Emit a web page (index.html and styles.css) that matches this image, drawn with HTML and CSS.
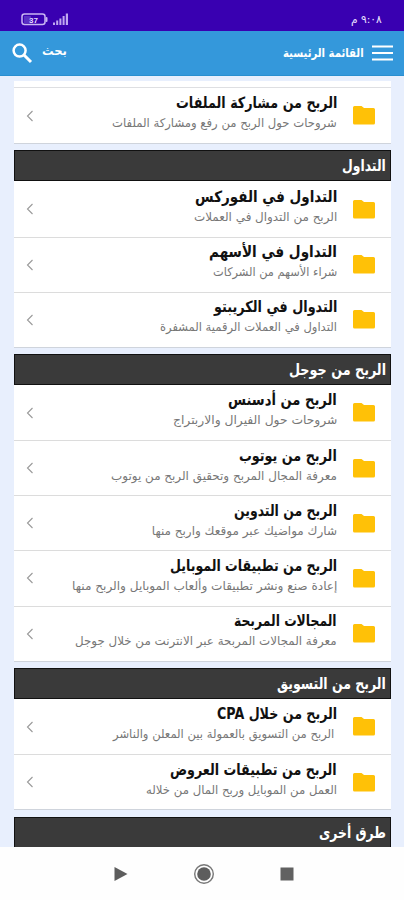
FILE: index.html
```html
<!DOCTYPE html>
<html lang="ar" dir="rtl">
<head>
<meta charset="utf-8">
<title>القائمة الرئيسية</title>
<link rel="stylesheet" href="styles.css">
</head>
<body>
<div class="status">
  <span class="clock"><span class="fit" data-w="31">٩:٠٨ م</span></span>
  <svg class="status-icons" width="50" height="14" viewBox="0 0 50 14">
    <rect x="1" y="2" width="23" height="10.5" rx="2.5" fill="none" stroke="#c9b5f2" stroke-width="1.5"/>
    <rect x="24.5" y="5" width="2" height="5" rx="1" fill="#c9b5f2"/>
    <rect x="3" y="4" width="7" height="7" fill="#5a2fc4"/>
    <text x="12.5" y="10.5" class="battery-text" direction="ltr" text-anchor="middle">37</text>
    <g fill="#c0a8f0"><rect x="32" y="10.5" width="2" height="2.5"/><rect x="35.2" y="8.5" width="2" height="4.5"/><rect x="38.4" y="6.5" width="2" height="6.5"/><rect x="41.6" y="4" width="2" height="9"/><rect x="44.8" y="1.5" width="2.2" height="11.5"/></g>
  </svg>
</div>
<header class="bar">
  <svg class="menu" width="21" height="16" viewBox="0 0 21 16"><path d="M0 1.5H21M0 8H21M0 14.5H21" stroke="#fff" stroke-width="2.2"/></svg>
  <span class="bar-title"><span class="fit" data-w="81">القائمة الرئيسية</span></span>
  <span class="search-label"><span class="fit" data-w="25">بحث</span></span>
  <svg class="search" width="21" height="21" viewBox="0 0 21 21"><circle cx="7.6" cy="7.6" r="6" fill="none" stroke="#fff" stroke-width="2.5"/><path d="M12 12L19 19" stroke="#fff" stroke-width="3"/></svg>
</header>
<main class="list" id="list"></main>
<nav class="nav">
  <svg width="14" height="14" viewBox="0 0 14 14"><path d="M.5.5h13v13H.5z" fill="#616161"/></svg>
  <svg width="22" height="22" viewBox="0 0 22 22"><circle cx="11" cy="11" r="9.3" fill="none" stroke="#777" stroke-width="1.4"/><circle cx="11" cy="11" r="6.8" fill="#5d5d5d"/></svg>
  <svg width="14" height="16" viewBox="0 0 14 16"><path d="M.5 1L13.5 8L.5 15Z" fill="#5d5d5d"/></svg>
</nav>
<script src="list.js"></script>
</body>
</html>
```
FILE: styles.css
```css
* { box-sizing: border-box; }
body {
  margin: 0;
  width: 404px;
  height: 900px;
  overflow: hidden;
  display: flex;
  flex-direction: column;
  background: #fefefe;
  font-family: "DejaVu Sans", sans-serif;
}
.fit {
  display: inline-block;
  white-space: nowrap;
  transform-origin: right center;
}
.status {
  flex: none;
  height: 31px;
  padding: 8px 22px 0 21px;
  display: flex;
  justify-content: space-between;
  align-items: center;
  background: #3900b1;
  color: #e9e0ff;
}
.clock { width: 31px; font-size: 11px; line-height: 14px; }
.status-icons { margin-top: -1px; }
.battery-text { font: bold 8px "Liberation Sans", sans-serif; fill: #e4d9ff; }
.bar {
  flex: none;
  height: 45px;
  padding: 0 11px 0 12px;
  display: flex;
  align-items: center;
  background: #3498db;
  color: #fff;
  font-size: 12px;
  font-weight: bold;
  line-height: 20px;
  border-bottom: 1px solid #298fd0;
}
.bar-title { width: 85px; margin-right: 8px; }
.search-label { width: 25px; margin-right: auto; margin-left: 9px; margin-top: -5px; }
.list {
  flex: none;
  height: 771px;
  overflow: hidden;
  padding: 5px 13px 0 14px;
  background: #e8effd;
}
.rows { background: #fff; border-bottom: 1px solid #cfd4dc; }
.stub { height: 7px; background: #fff; border-bottom: 1px solid #dedfe2; }
.heading {
  height: 31px;
  margin-top: 6.4px;
  padding-right: 4px;
  background: #3a3a3a;
  border: 1px solid #111;
  color: #fff;
  font-size: 15.5px;
  font-weight: bold;
  line-height: 31px;
}
.heading .fit { vertical-align: top; }
.row {
  height: 55.1px;
  display: flex;
  align-items: center;
  padding: 0 16px 0 12px;
}
.row + .row { border-top: 1px solid #dcdcdc; }
.folder { flex: none; margin-left: 16px; }
.text { flex: 1; min-width: 0; overflow: visible; }
.title, .sub { display: block; height: 20px; line-height: 20px; }
.title { font-size: 15.5px; font-weight: bold; color: #111; margin-top: -5px; }
.sub { font-size: 12px; color: #777; }
.sub.indent { padding-right: 3px; }
.chevron { flex: none; }
.nav {
  flex: 1;
  display: flex;
  align-items: center;
  justify-content: space-between;
  padding: 0 110px 0 114px;
  background: #fefefe;
}
```
FILE: list.js
```js
// Each row: title, title width, subtitle, subtitle width.
const groups = [
  { rows: [["الربح من مشاركة الملفات", 161, "شروحات حول الربح من رفع ومشاركة الملفات", 225]] },
  { name: "التداول", w: 44, rows: [
    ["التداول في الفوركس", 142, "الربح من التدوال في العملات", 143],
    ["التداول في الأسهم", 128, "شراء الأسهم من الشركات", 124],
    ["التدوال في الكريبتو", 123, "التداول في العملات الرقمية المشفرة", 177]] },
  { name: "الربح من جوجل", w: 97, rows: [
    ["الربح من أدسنس", 109, "شروحات حول الفيرال والاربتراج", 164],
    ["الربح من يوتوب", 98, "معرفة المجال المربح وتحقيق الربح من يوتوب", 226],
    ["الربح من التدوين", 103, "شارك مواضيك عبر موقعك واربح منها", 185],
    ["الربح من تطبيقات الموبايل", 167, "إعادة صنع ونشر تطبيقات وألعاب الموبايل والربح منها", 265],
    ["المجالات المربحة", 103, "معرفة المجالات المربحة عبر الانترنت من خلال جوجل", 262]] },
  { name: "الربح من التسويق", w: 109, rows: [
    ["الربح من خلال CPA", 120, "الربح من التسويق بالعمولة بين المعلن والناشر", 221, "indent"],
    ["الربح من تطبيقات العروض", 167, "العمل من الموبايل وربح المال من خلاله", 191]] },
  { name: "طرق أخرى", w: 67, rows: [] }
];
const folder = '<svg class="folder" width="22" height="19" viewBox="0 0 22 19"><path d="M1.5 0H8.5L11 2H20.5Q22 2 22 3.5V17Q22 18.5 20.5 18.5H1.5Q0 18.5 0 17V1.5Q0 0 1.5 0Z" fill="#ffc107"/></svg>';
const chevron = '<svg class="chevron" width="8" height="12" viewBox="0 0 8 12"><path d="M6.5 1L1.5 6L6.5 11" fill="none" stroke="#999" stroke-width="1.1"/></svg>';
const fit = (t, w) => `<span class="fit" data-w="${w}">${t}</span>`;
document.getElementById("list").innerHTML = groups.map(g =>
  (g.name ? `<div class="heading">${fit(g.name, g.w)}</div>` : '<div class="stub"></div>') +
  (g.rows.length ? '<section class="rows">' + g.rows.map(r =>
    `<div class="row">${folder}<div class="text"><span class="title">${fit(r[0], r[1])}</span><span class="sub ${r[4] || ""}">${fit(r[2], r[3])}</span></div>${chevron}</div>`
  ).join("") + "</section>" : "")).join("");
document.querySelectorAll(".fit").forEach(el => {
  el.style.transform = `scaleX(${el.dataset.w / el.offsetWidth})`;
});
```
